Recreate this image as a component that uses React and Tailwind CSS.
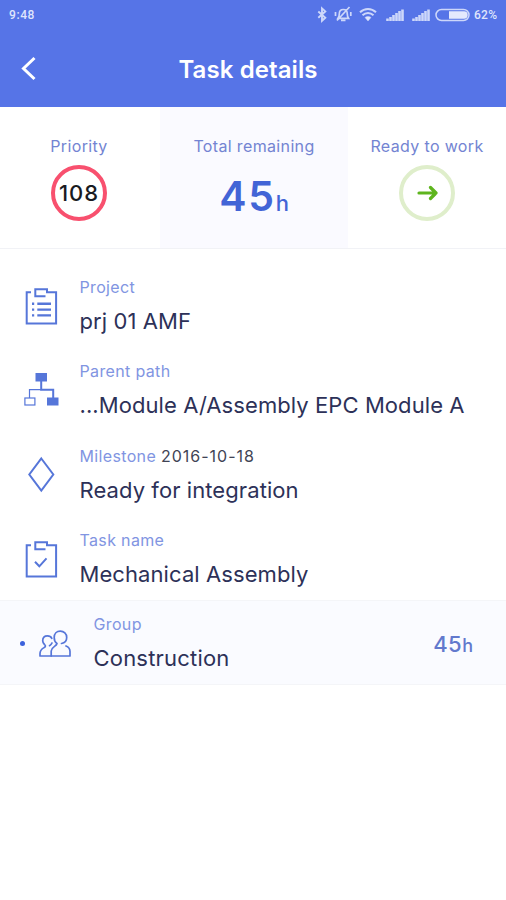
const BLUE = '#5676d9';

function StatusBar() {
  return (
    <div className="flex h-[30px] items-center justify-between pl-[9px] pr-[8px] font-['Roboto',sans-serif] text-[12px] font-medium text-[#dfe5fc]">
      <span className="tracking-[0.6px]">9:48</span>
      <div className="flex items-center">
        <svg className="block" width="154" height="20" viewBox="317 5 154 20" fill="none" stroke="#cdd7fa">
          <path d="M318.300 11.500l7 6.300-3.300 3V8.400l3.300 3-7 6.300" strokeWidth="1.900" />
          <path d="M338 18.300h10.500c-1-1.500-1.200-2.700-1.200-4.300c0-3-1.500-4.500-4-4.500s-4 1.500-4 4.500c0 1.600-.3 2.800-1.300 4.300zM337 20.500l12.500-13.500M341 20.300h4.500M335.500 12v4M350.800 12v4" strokeWidth="1.700" />
          <path d="M360 12.300c4.600-4.400 11.400-4.400 16 0M362.500 15.200c3.200-3 7.800-3 11 0" strokeWidth="2" />
          <path d="M365 17.500c1.700-1.500 4.300-1.500 6 0L368 21z" fill="#dfe5fc" strokeWidth=".5" />
          <path d="M387.500 21v-2.500M390.500 21v-4M393.500 21v-6M396.500 21v-8M399.500 21v-10M402.500 21V9.500M413.500 21v-2.500M416.500 21v-4M419.500 21v-6M422.500 21v-8M425.500 21v-10M428.500 21V9.500" strokeWidth="2.600" />
          <rect x="436" y="9.500" width="33" height="11" rx="5.500" strokeWidth="1.500" />
          <path d="M449 11.300h15a3.700 3.700 0 0 1 0 7.400h-15z" fill="#e4e9fd" stroke="none" />
        </svg>
        <span className="ml-[3px] w-[24px] whitespace-nowrap tracking-[0.3px]">62%</span>
      </div>
    </div>
  );
}

function Clipboard({ children }) {
  return (
    <svg width="40" height="40" viewBox="0 0 40 40" fill="none" stroke={BLUE} strokeWidth="2">
      <path d="M11 6.300H6.700V37.400H36.100V6.300H27V3.300H15.300V10.300H25.500" />
      {children}
    </svg>
  );
}

function ProjectIcon() {
  return (
    <Clipboard>
      <path d="M12 17.800h2.200M12 23.600h2.200M12 29.400h2.200M17.300 17.800h13.700M17.300 23.600h13.700M17.300 29.400h13.700" strokeWidth="2.400" />
    </Clipboard>
  );
}

function TaskIcon() {
  return (
    <Clipboard>
      <path d="M15 22.800l4.300 4.500 7.200-8" />
    </Clipboard>
  );
}

function PathIcon() {
  return (
    <svg width="40" height="40" viewBox="0 0 40 40" fill={BLUE}>
      <rect x="15.500" y="3" width="11.500" height="8.500" />
      <rect x="27" y="27.500" width="11.500" height="8" />
      <path d="M21.200 11v8.700h12V28" fill="none" stroke={BLUE} strokeWidth="2" />
      <path d="M21.200 19.700H9.500V28" fill="none" stroke={BLUE} strokeWidth="1.200" />
      <rect x="4.900" y="28" width="10" height="7" fill="none" stroke={BLUE} strokeWidth="1.200" />
    </svg>
  );
}

function MilestoneIcon() {
  return (
    <svg width="40" height="40" viewBox="0 0 40 40" fill="none" stroke={BLUE} strokeWidth="2">
      <path d="M21.300 3.500L33.300 19.500L21.300 35.500L9.300 19.500z" />
    </svg>
  );
}

function GroupIcon() {
  return (
    <svg width="34" height="30" viewBox="0 0 34 30" fill="none" stroke={BLUE} strokeWidth="1.700" strokeLinecap="round" strokeLinejoin="round">
      <path d="M19 14.500C17 13.300 16.200 11.100 16.200 8.500C16.200 4.800 18.700 2.200 22.300 2.200S28.700 4.800 28.700 8.500C28.700 11.700 26.700 14 23.500 14.500M19 14.500C18.500 17.500 13.500 17.500 13.200 22V27H32V22.500C32 19.700 30.500 18 28 17" />
      <path d="M13.200 27H2V24.500C2 20.800 4 19.800 6.300 18.500C8 17.500 7.500 16.500 6.500 15.500C5.400 14.500 4.700 13.300 4.700 11.800C4.700 8.900 6.600 6.900 9.500 6.900C11.600 6.900 13 7.700 13.800 9.300M14 14C13.500 15.200 12.500 16.200 11.500 16.700" />
    </svg>
  );
}

function Stat({ label, className, children }) {
  return (
    <div className={`flex flex-col items-center pt-[29px] ${className}`}>
      <span className="text-[16px] leading-[20px] tracking-[0.35px] text-[#7384d2]">{label}</span>
      {children}
    </div>
  );
}

function Label({ children }) {
  return <div className="text-[16px] leading-[20px] tracking-[0.35px] text-[#8195e2]">{children}</div>;
}

function Field({ icon, label, extra, value }) {
  return (
    <div className="flex h-[84.4px] pl-[20px] pt-[14px]">
      <div className="mt-[9px] w-[59.500px] shrink-0">{icon}</div>
      <div>
        <Label>
          {label} {extra && <span className="tracking-[1px] text-[#414455]">{extra}</span>}
        </Label>
        <div className="mt-[9px] whitespace-nowrap text-[22px] leading-[30px] tracking-[0.080px] text-[#2d3158]">{value}</div>
      </div>
    </div>
  );
}

export default function App() {
  return (
    <div className="h-[900px] w-[506px] overflow-hidden bg-white font-['Inter',sans-serif]">
      <header className="h-[107px] bg-[#5674e7]">
        <StatusBar />
        <div className="grid h-[77px] grid-cols-[60px_1fr_60px] items-center">
          <svg className="mb-[2px] ml-[14px]" width="30" height="30" viewBox="0 0 30 30" fill="none" stroke="white" strokeWidth="3">
            <path d="M20.500 5L9.500 15.500L20.500 26" />
          </svg>
          <h1 className="ml-[-10px] pt-[2px] text-center text-[24px] font-semibold tracking-[0.1px] text-white">Task details</h1>
        </div>
      </header>
      <section className="grid h-[142px] grid-cols-[160px_188px_158px] border-b border-[#f1f2f6]">
        <Stat label="Priority" className="pr-[2px]">
          <div className="mt-[9px] flex size-[56px] items-center justify-center rounded-full border-[4px] border-[#f8506e] pt-[1px] text-[22px] font-medium tracking-[1px] text-[#191b22]">108</div>
        </Stat>
        <Stat label="Total remaining" className="bg-[#fafaff]">
          <div className="mt-[12px] flex items-baseline font-semibold leading-[56px] text-[#4264d6]">
            <span className="text-[41px] tracking-[1.700px]">45</span>
            <span className="text-[22px] font-medium">h</span>
          </div>
        </Stat>
        <Stat label="Ready to work" className="">
          <div className="mt-[9px] flex size-[56px] items-center justify-center rounded-full border-[4px] border-[#dfeecb]">
            <svg width="22" height="16" viewBox="0 0 22 16" fill="none" stroke="#5eb51e" strokeWidth="3.200" strokeLinecap="round" strokeLinejoin="round">
              <path d="M3 8H20M14.500 2.500L20 8L14.500 13.500" />
            </svg>
          </div>
        </Stat>
      </section>
      <main className="pt-[14px]">
        <Field icon={<ProjectIcon />} label="Project" value="prj 01 AMF" />
        <Field icon={<PathIcon />} label="Parent path" value="...Module A/Assembly EPC Module A" />
        <Field icon={<MilestoneIcon />} label="Milestone" extra="2016-10-18" value="Ready for integration" />
        <Field icon={<TaskIcon />} label="Task name" value="Mechanical Assembly" />
        <div className="-mt-[0.600px] flex h-[85px] items-center border-y border-[#f4f5f8] bg-[#fafbff] pl-[20px] pr-[33px]">
          <div className="mt-[2px] size-[5px] rounded-full bg-[#3c62dc]" />
          <div className="ml-[13px] mt-[3px] w-[55.500px]"><GroupIcon /></div>
          <div className="flex-1 pt-[3px]">
            <Label>Group</Label>
            <div className="mt-[9px] text-[22px] leading-[30px] tracking-[0.2px] text-[#2d3158]">Construction</div>
          </div>
          <div className="flex items-baseline pt-[4px] font-medium text-[#6279cd]">
            <span className="text-[22px] tracking-[0.5px]">45</span>
            <span className="text-[18px]">h</span>
          </div>
        </div>
      </main>
    </div>
  );
}
